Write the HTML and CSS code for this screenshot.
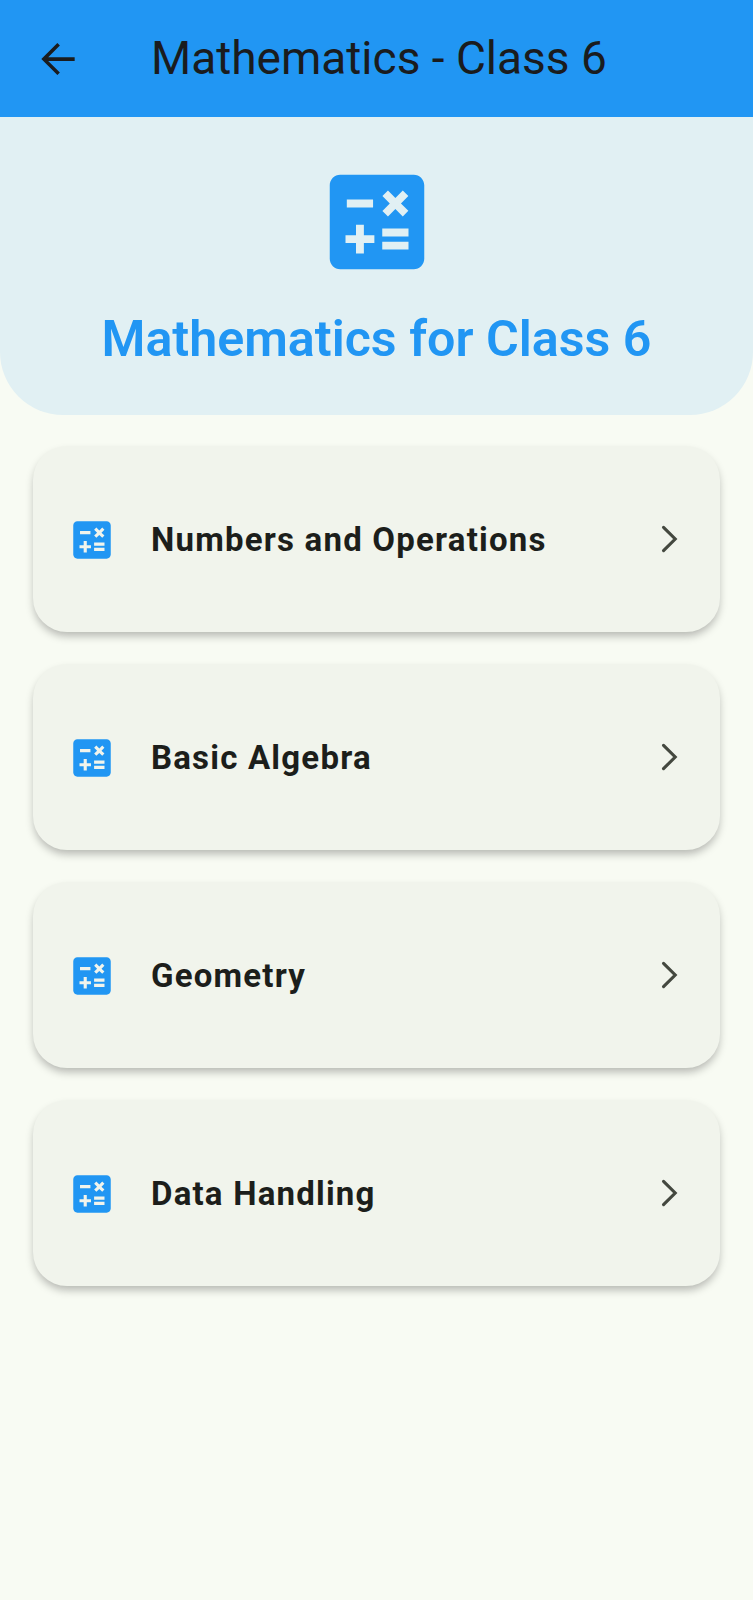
FILE: index.html
```html
<!DOCTYPE html>
<html lang="en">
<head>
  <meta charset="UTF-8" />
  <meta name="viewport" content="width=device-width, initial-scale=1.0"/>
  <title>Mathematics - Class 6</title>
  <link rel="stylesheet" href="styles.css">
</head>
<body>
  <svg class="defs" width="0" height="0">
    <symbol id="calc" viewBox="0 0 24 24">
      <path d="M19 3H5c-1.1 0-2 .9-2 2v14c0 1.1.9 2 2 2h14c1.1 0 2-.9 2-2V5c0-1.1-.9-2-2-2zm-5.970 4.060L14.090 6l1.410 1.410L16.910 6l1.060 1.060-1.410 1.410 1.410 1.410-1.060 1.060-1.410-1.400-1.410 1.410-1.060-1.060 1.410-1.410-1.410-1.420zm-6.780.660h5v1.500h-5v-1.500zM11.500 16h-2v2H8v-2H6v-1.500h2v-2h1.500v2h2V16zm6.500 1.250h-5v-1.500h5v1.500zm0-2.500h-5v-1.500h5v1.500z"/>
    </symbol>
    <symbol id="chevron" viewBox="0 0 24 24">
      <path d="M8.900 6.400 14.500 12l-5.600 5.600" fill="none" stroke="currentColor" stroke-width="1.500" stroke-linecap="round" stroke-linejoin="miter"/>
    </symbol>
  </svg>

  <div class="appbar">
    <svg class="backIcon" viewBox="0 0 24 24">
      <path d="M20 11.100H7.300l5.600-5.600L11.700 4.300 4 12l7.700 7.700 1.200-1.200-5.600-5.600H20z"/>
    </svg>
    <div class="appbarTitle">Mathematics - Class 6</div>
  </div>

  <div class="banner">
    <svg class="bannerIcon"><use href="#calc"/></svg>
    <div class="bannerTitle">Mathematics for Class 6</div>
  </div>

  <div class="list">
    <div class="card">
      <svg class="cardIcon"><use href="#calc"/></svg>
      <div class="cardText">Numbers and Operations</div>
      <svg class="cardArrow"><use href="#chevron"/></svg>
    </div>
    <div class="card">
      <svg class="cardIcon"><use href="#calc"/></svg>
      <div class="cardText">Basic Algebra</div>
      <svg class="cardArrow"><use href="#chevron"/></svg>
    </div>
    <div class="card">
      <svg class="cardIcon"><use href="#calc"/></svg>
      <div class="cardText">Geometry</div>
      <svg class="cardArrow"><use href="#chevron"/></svg>
    </div>
    <div class="card">
      <svg class="cardIcon"><use href="#calc"/></svg>
      <div class="cardText">Data Handling</div>
      <svg class="cardArrow"><use href="#chevron"/></svg>
    </div>
  </div>
</body>
</html>
```

FILE: styles.css
```css
html, body {
  height: 100%;
}

body {
  background-color: #f8fbf3;
  color: #1c1e1b;
  font-family: Roboto, sans-serif;
  margin: 0;
  padding: 0;
}

.defs {
  position: absolute;
}

.appbar {
  height: 117px;
  background-color: #2196f3;
  display: flex;
  align-items: center;
  padding-left: 33px;
}

.backIcon {
  width: 50px;
  height: 50px;
  fill: #1a1c1e;
}

.appbarTitle {
  margin-left: 68px;
  font-size: 46px;
  color: #1a1c1e;
  margin-top: -1px;
}

/* Header block */
.banner {
  height: 298px;
  box-sizing: border-box;
  background-color: #e1f0f3;
  border-radius: 0 0 63px 63px;
  padding-top: 42px;
  display: flex;
  flex-direction: column;
  align-items: center;
}

.bannerIcon {
  width: 126px;
  height: 126px;
  fill: #2196f3;
}

.bannerTitle {
  margin-top: 24px;
  font-size: 50.2px;
  font-weight: 600;
  color: #2196f3;
}

.list {
  padding: 31px 33px 0 33px;
  display: flex;
  flex-direction: column;
  gap: 32px;
}

.card {
  height: 186px;
  box-sizing: border-box;
  background-color: #f1f4ec;
  border-radius: 34px;
  box-shadow: 0 5px 8px -1px rgba(0, 0, 0, 0.27);
  display: flex;
  align-items: center;
  padding: 0 25px 0 34px;
}

.cardIcon {
  width: 50px;
  height: 50px;
  fill: #2196f3;
  flex: none;
  margin-top: 2px;
}

.cardText {
  flex: 1;
  margin-left: 34px;
  font-size: 33px;
  font-weight: 700;
  letter-spacing: 1.2px;
  color: #1c1e1b;
}

.cardArrow {
  width: 50px;
  height: 50px;
  color: #44483f;
  flex: none;
}
```
